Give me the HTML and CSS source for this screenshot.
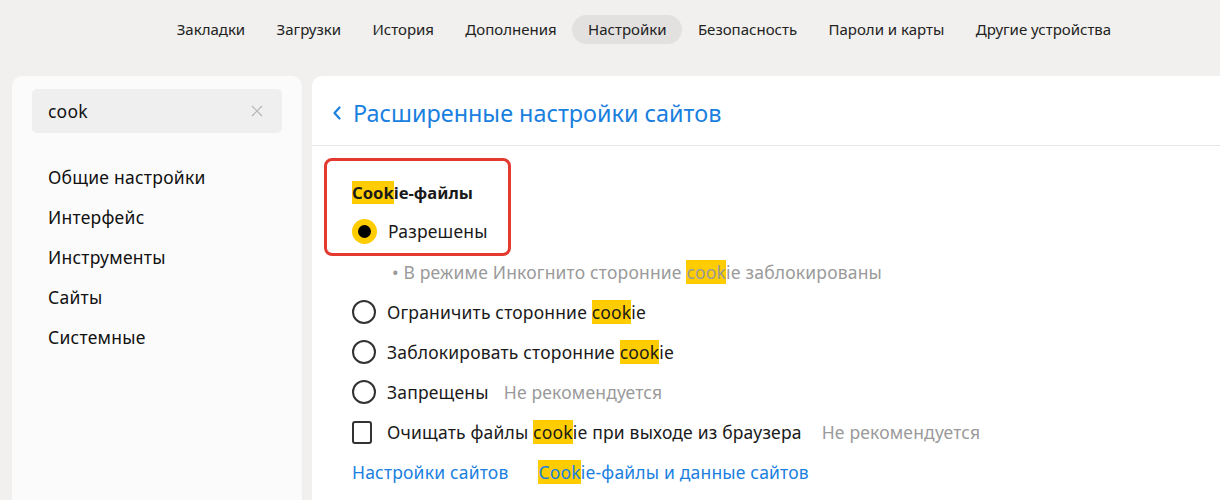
FILE: index.html
```html
<!DOCTYPE html>
<html lang="ru">
<head>
<meta charset="utf-8">
<link rel="stylesheet" href="styles.css">
</head>
<body>
<nav class="topnav">
  <a class="nav-item">Закладки</a>
  <a class="nav-item">Загрузки</a>
  <a class="nav-item">История</a>
  <a class="nav-item">Дополнения</a>
  <a class="nav-item active">Настройки</a>
  <a class="nav-item">Безопасность</a>
  <a class="nav-item">Пароли и карты</a>
  <a class="nav-item">Другие устройства</a>
</nav>
<div class="layout">
  <aside class="sidebar">
    <div class="search">
      <span class="search-text">cook</span>
      <svg class="search-clear" width="12" height="12" viewBox="0 0 12 12"><path d="M1 1L11 11M11 1L1 11" stroke="#b5b5b5" stroke-width="1.2" fill="none"/></svg>
    </div>
    <ul class="menu">
      <li>Общие настройки</li>
      <li>Интерфейс</li>
      <li>Инструменты</li>
      <li>Сайты</li>
      <li>Системные</li>
    </ul>
  </aside>
  <main class="card">
    <header class="card-head">
      <svg class="back" width="10" height="16" viewBox="0 0 10 16"><path d="M7.5 2.5L2.5 8L7.5 13.5" stroke="#1a80e0" stroke-width="2.2" fill="none" stroke-linecap="round" stroke-linejoin="round"/></svg>
      <h1 class="title">Расширенные настройки сайтов</h1>
    </header>
    <section class="content">
      <div class="focus-box">
        <div class="heading"><mark>Cook</mark>ie-файлы</div>
        <div class="row"><span class="radio checked"></span><span class="label">Разрешены</span></div>
      </div>
      <div class="row note"><span>• В режиме Инкогнито сторонние <mark>cook</mark>ie заблокированы</span></div>
      <div class="row"><span class="radio"></span><span class="label">Ограничить сторонние <mark>cook</mark>ie</span></div>
      <div class="row"><span class="radio"></span><span class="label">Заблокировать сторонние <mark>cook</mark>ie</span></div>
      <div class="row"><span class="radio"></span><span class="label">Запрещены</span><span class="hint">Не рекомендуется</span></div>
      <div class="row"><span class="checkbox"></span><span class="label">Очищать файлы <mark>cook</mark>ie при выходе из браузера</span><span class="hint wide">Не рекомендуется</span></div>
      <div class="row links"><a class="link">Настройки сайтов</a><a class="link"><mark>Cook</mark>ie-файлы и данные сайтов</a></div>
    </section>
  </main>
</div>
</body>
</html>
```
FILE: styles.css
```css
* { box-sizing: border-box; }
html, body { height: 100%; }
body {
  margin: 0;
  background: #f1f0ee;
  font-family: "Noto Sans", "Open Sans", sans-serif;
  color: #1a1a1a;
  overflow: hidden;
}
mark { background: #ffcc00; color: inherit; }

.topnav {
  display: flex;
  align-items: center;
  height: 58px;
  padding-left: 161px;
}
.nav-item {
  font-size: 15px;
  line-height: 29px;
  padding: 0 15.7px;
  border-radius: 15px;
  color: #222;
}
.nav-item.active { background: #e2e1df; }

.layout {
  display: flex;
  gap: 10px;
  padding: 18px 0 0 12px;
  height: calc(100% - 58px);
}
.sidebar {
  width: 290px;
  flex: none;
  background: #fbfbfb;
  border-radius: 10px 10px 0 0;
  padding: 13px 20px 0;
}
.search {
  display: flex;
  align-items: center;
  justify-content: space-between;
  height: 44px;
  background: #efefef;
  border-radius: 5px;
  padding: 0 19px 0 16px;
}
.search-text { font-size: 17.5px; color: #111; letter-spacing: 0.2px; }
.menu {
  list-style: none;
  margin: 24px 0 0;
  padding: 0 0 0 16px;
}
.menu li { font-size: 17.5px; line-height: 40px; color: #111; letter-spacing: 0.25px; }

.card {
  flex: 1;
  background: #fff;
  border-radius: 10px 0 0 0;
}
.card-head {
  display: flex;
  align-items: center;
  height: 70px;
  border-bottom: 1px solid #e6e6e6;
  padding: 4px 0 0 20px;
}
.back { margin-right: 11px; }
.title {
  margin: 0;
  font-weight: 400;
  font-size: 23.4px;
  color: #1a80e0;
}
.content { padding: 12px 0 0 40px; }
.focus-box {
  width: 187px;
  margin-left: -28px;
  border: 3px solid #e4392f;
  border-radius: 8px;
  padding: 14px 0 2px 25px;
}
.heading { font-size: 16.6px; font-weight: 700; line-height: 36px; }
.row {
  display: flex;
  align-items: center;
  height: 40px;
  font-size: 17.5px;
  letter-spacing: 0.18px;
  white-space: nowrap;
}
.row.note { margin-top: -4px; padding-left: 40px; color: #9a9a9a; }
.radio {
  width: 24px; height: 24px;
  border: 2px solid #333;
  border-radius: 50%;
  flex: none;
  margin-right: 11px;
}
.radio.checked {
  width: 25px; height: 25px;
  border: 6px solid #ffcc00;
  background: #000;
}
.checkbox {
  width: 20px; height: 23px;
  border: 2px solid #333;
  border-radius: 3px;
  flex: none;
  margin-right: 15px;
}
.label { color: #1a1a1a; }
.hint { color: #9a9a9a; margin-left: 15px; }
.hint.wide { margin-left: 20px; }
.links { gap: 30px; }
.link { color: #1a80e0; }
```
